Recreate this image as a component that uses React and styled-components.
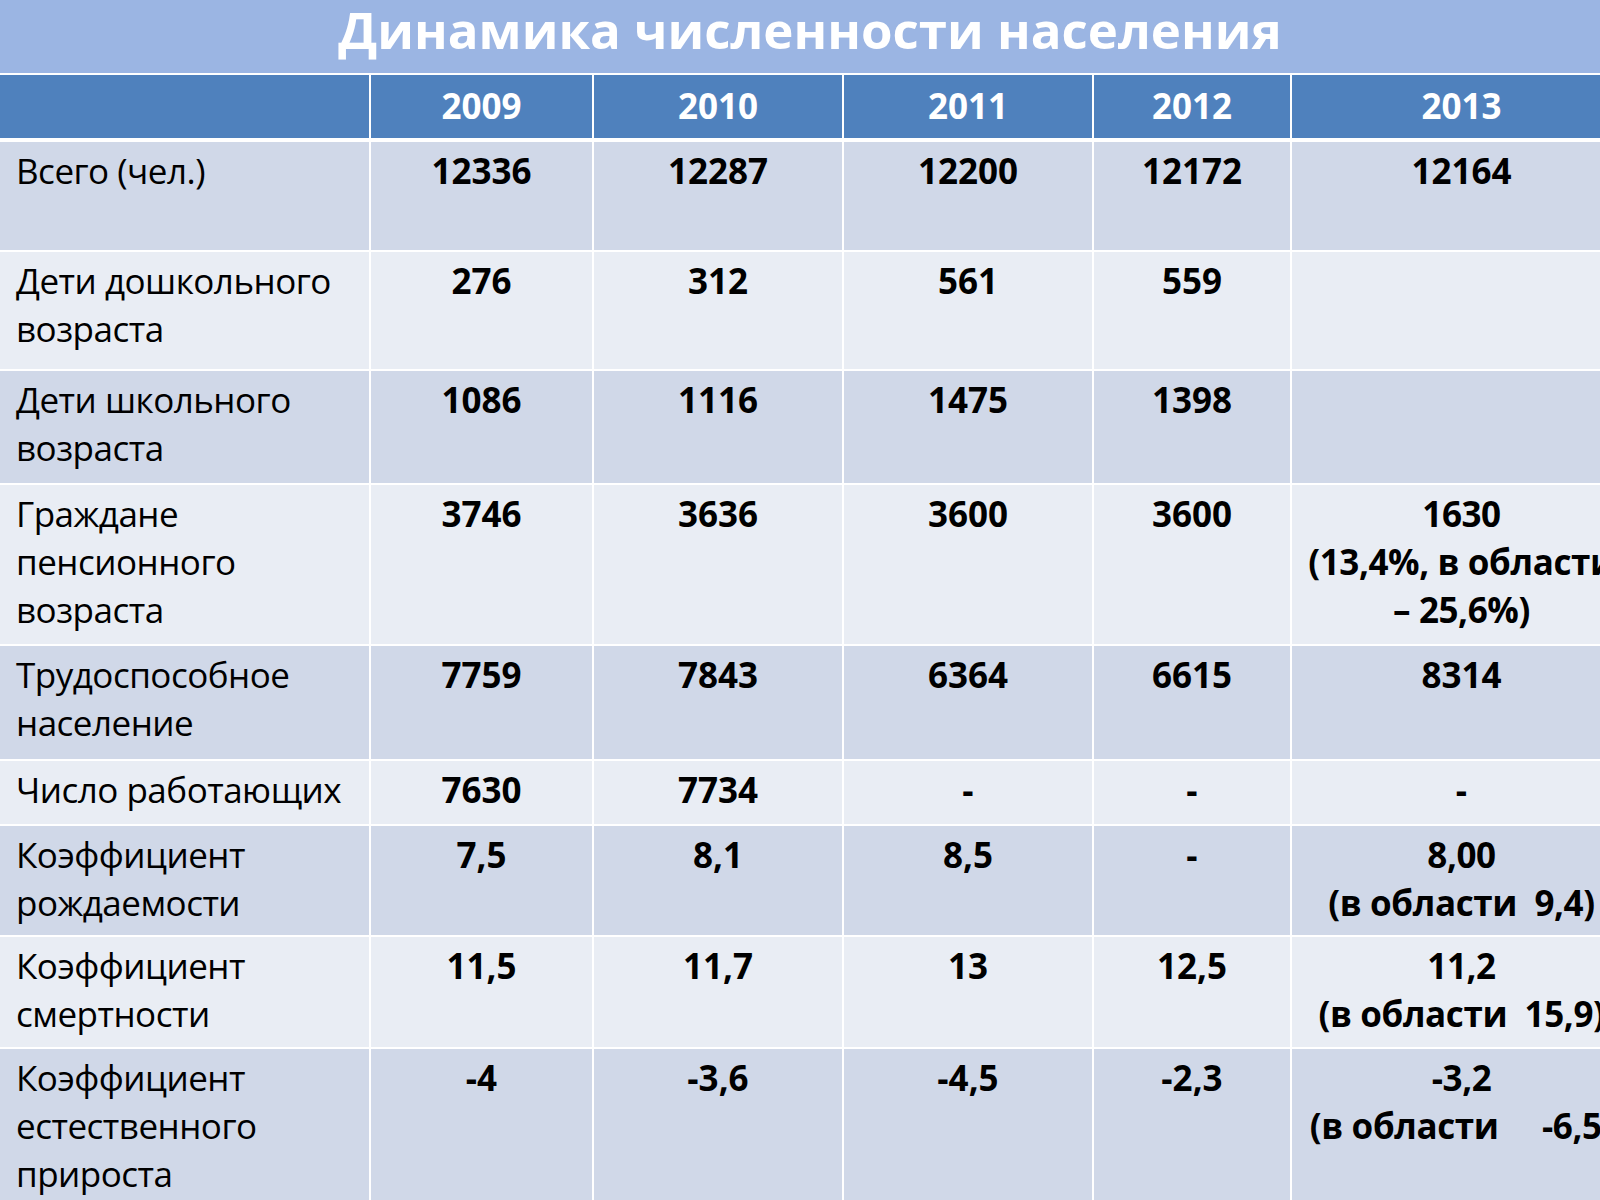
import styled, { createGlobalStyle } from 'styled-components';

const GlobalStyle = createGlobalStyle`
  html, body {
    margin: 0;
    padding: 0;
    background: #ffffff;
  }
  body {
    width: 1600px;
    height: 1200px;
    overflow: hidden;
    font-family: "Open Sans", "Noto Sans", sans-serif;
  }
`;

const years = ['2009', '2010', '2011', '2012', '2013'];

const rows = [
  { label: 'Всего (чел.)', values: ['12336', '12287', '12200', '12172', '12164'], height: 111 },
  { label: 'Дети дошкольного возраста', values: ['276', '312', '561', '559', ''], height: 119 },
  { label: 'Дети школьного возраста', values: ['1086', '1116', '1475', '1398', ''], height: 114 },
  {
    label: 'Граждане пенсионного возраста',
    values: ['3746', '3636', '3600', '3600', ['1630', '(13,4%, в области', '– 25,6%)']],
    height: 161
  },
  { label: 'Трудоспособное население', values: ['7759', '7843', '6364', '6615', '8314'], height: 115 },
  { label: 'Число работающих', values: ['7630', '7734', '-', '-', '-'], height: 65 },
  {
    label: 'Коэффициент рождаемости',
    values: ['7,5', '8,1', '8,5', '-', ['8,00', '(в области\u00a0 9,4)']],
    height: 111
  },
  {
    label: 'Коэффициент смертности',
    values: ['11,5', '11,7', '13', '12,5', ['11,2', '(в области\u00a0 15,9)']],
    height: 112
  },
  {
    label: 'Коэффициент естественного прироста',
    values: ['-4', '-3,6', '-4,5', '-2,3', ['-3,2', '(в области\u00a0\u00a0\u00a0\u00a0 -6,5)']],
    height: 170
  }
];

const colWidths = [370, 223, 250, 250, 198, 341];

const App = () => {
  return (
    <>
      <GlobalStyle />
      <Slide>
        <Title>Динамика численности населения</Title>
        <Table>
          <colgroup>
            {colWidths.map((w, i) => (
              <col key={i} style={{ width: w }} />
            ))}
          </colgroup>
          <thead>
            <HeadRow>
              <HeadCell />
              {years.map(y => (
                <HeadCell key={y}>{y}</HeadCell>
              ))}
            </HeadRow>
          </thead>
          <tbody>
            {rows.map((row, i) => (
              <BodyRow key={row.label} $odd={i % 2 === 0} style={{ height: row.height }}>
                <LabelCell>{row.label}</LabelCell>
                {row.values.map((v, j) => (
                  <ValueCell key={j}>
                    {Array.isArray(v)
                      ? v.map((line, k) => <Line key={k}>{line}</Line>)
                      : v}
                  </ValueCell>
                ))}
              </BodyRow>
            ))}
          </tbody>
        </Table>
      </Slide>
    </>
  );
};

const Slide = styled.div`
  width: 1600px;
  height: 1200px;
  overflow: hidden;
  background: #ffffff;
`;

const Title = styled.h1`
  margin: 0;
  height: 73px;
  background-color: #9bb5e3;
  border-bottom: 2px solid #ffffff;
  color: #ffffff;
  font-family: "Open Sans", "Noto Sans", sans-serif;
  font-weight: 700;
  font-size: 51px;
  line-height: 58px;
  text-align: center;
  white-space: nowrap;
  padding-left: 20px;
`;

const Table = styled.table`
  width: 1632px;
  table-layout: fixed;
  border-collapse: collapse;
  font-size: 35px;
  line-height: 48px;
  color: #000000;
`;

const HeadRow = styled.tr`
  height: 65px;
  background-color: #4f81bd;
`;

const HeadCell = styled.th`
  padding: 0 0 2px;
  border-left: 2px solid #ffffff;
  border-right: 2px solid #ffffff;
  border-bottom: 4px solid #ffffff;
  color: #ffffff;
  font-weight: 700;
  text-align: center;
  vertical-align: middle;

  &:first-child {
    border-left: none;
  }
`;

const BodyRow = styled.tr`
  background-color: ${props => (props.$odd ? '#d0d8e8' : '#e9edf4')};
`;

const LabelCell = styled.td`
  padding: 5px 10px 0 16px;
  border: 2px solid #ffffff;
  border-left: none;
  vertical-align: top;
  text-align: left;
  font-weight: 400;
  letter-spacing: -0.5px;
`;

const ValueCell = styled.td`
  padding: 5px 4px 0;
  border: 2px solid #ffffff;
  vertical-align: top;
  text-align: center;
  font-weight: 700;
  white-space: nowrap;
`;

const Line = styled.div`
  white-space: nowrap;
  letter-spacing: -0.4px;
`;

export default App;
